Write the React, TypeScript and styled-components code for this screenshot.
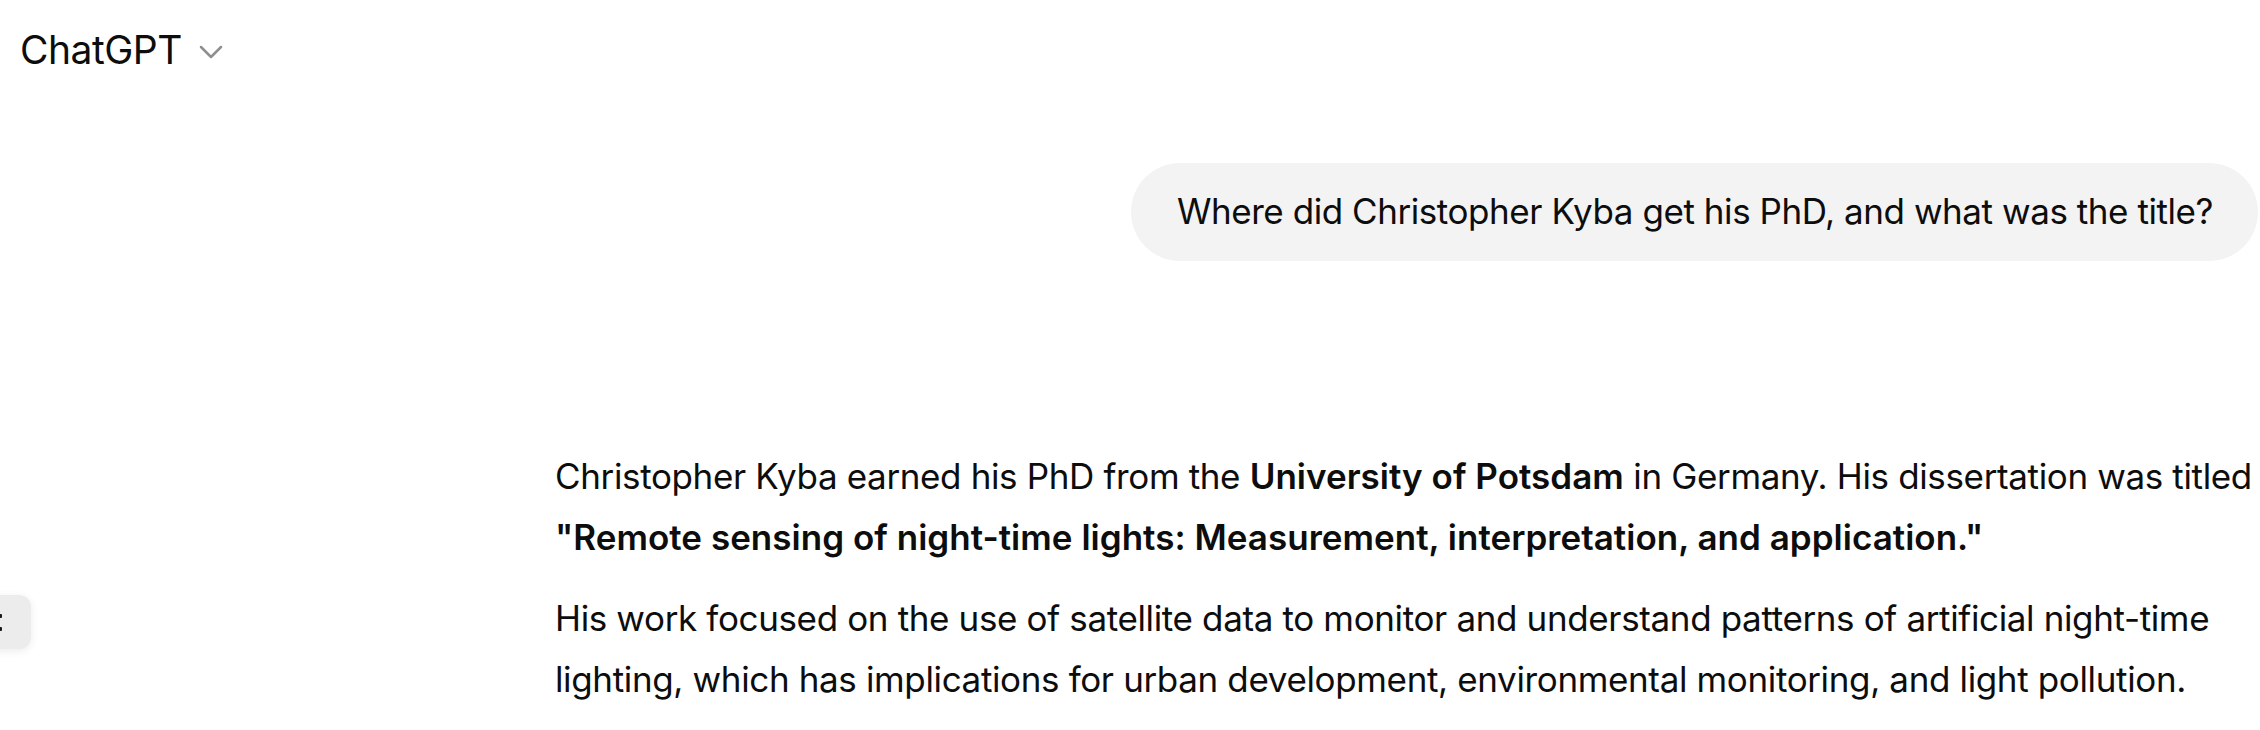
import styled, { createGlobalStyle } from 'styled-components'

const GlobalStyle = createGlobalStyle`
  html, body {
    margin: 0;
    padding: 0;
    background: #ffffff;
  }
  body {
    font-family: Inter, 'Noto Sans', 'Liberation Sans', sans-serif;
    color: #0d0d0d;
    -webkit-font-smoothing: antialiased;
  }
`

const Page = styled.div`
  position: relative;
  width: 2260px;
  height: 730px;
  overflow: hidden;
  background: #ffffff;
`

const Header = styled.header`
  display: flex;
  align-items: center;
  gap: 17px;
  padding: 30px 20px 0;
`

const ModelName = styled.span`
  font-size: 39px;
  line-height: 40px;
  font-weight: 400;
  letter-spacing: -0.5px;
  color: #0d0d0d;
`

const Chevron = styled.svg`
  width: 24px;
  height: 14px;
  margin-top: 3px;
  color: #8f8f8f;
`

const Thread = styled.main`
  display: flex;
  flex-direction: column;
  padding: 0 2px 0 555px;
`

const UserRow = styled.div`
  display: flex;
  justify-content: flex-end;
  margin-top: 93px;
`

const Bubble = styled.div`
  background: #f3f3f3;
  border-radius: 49px;
  padding: 18px 45px 18px 46px;
  font-size: 35px;
  line-height: 61.6px;
  letter-spacing: -0.44px;
  white-space: nowrap;
`

const Answer = styled.article`
  margin-top: 185px;
`

const Paragraph = styled.p`
  margin: 0 0 19px;
  font-size: 35px;
  line-height: 61.6px;
  letter-spacing: -0.36px;

  strong {
    font-weight: 600;
    letter-spacing: 0.02px;
  }
`

const SideTab = styled.div`
  position: absolute;
  left: -20px;
  top: 595px;
  width: 51px;
  height: 54px;
  border-radius: 12px;
  background: #ececec;
  box-shadow: 0 2px 8px rgba(0, 0, 0, 0.08);
  display: flex;
  flex-direction: column;
  justify-content: center;
  gap: 9px;
  padding-left: 18px;
  box-sizing: border-box;
`

const TabMark = styled.span`
  display: block;
  width: 4px;
  height: 4px;
  background: #1a1a1a;
  border-radius: 1px;
`

export default function App() {
  return (
    <Page>
      <GlobalStyle />
      <Header>
        <ModelName>ChatGPT</ModelName>
        <Chevron viewBox="0 0 24 14" fill="none">
          <path
            d="M2 2l10 10 10-10"
            stroke="currentColor"
            strokeWidth="2.5"
            strokeLinecap="round"
            strokeLinejoin="round"
          />
        </Chevron>
      </Header>

      <Thread>
        <UserRow>
          <Bubble>Where did Christopher Kyba get his PhD, and what was the title?</Bubble>
        </UserRow>

        <Answer>
          <Paragraph>
            Christopher Kyba earned his PhD from the <strong>University of Potsdam</strong> in
            Germany. His dissertation was titled{' '}
            <strong>
              "Remote sensing of night-time lights: Measurement, interpretation, and application."
            </strong>
          </Paragraph>
          <Paragraph>
            His work focused on the use of satellite data to monitor and understand patterns of
            artificial night-time lighting, which has implications for urban development,
            environmental monitoring, and light pollution.
          </Paragraph>
        </Answer>
      </Thread>

      <SideTab>
        <TabMark />
        <TabMark />
      </SideTab>
    </Page>
  )
}
